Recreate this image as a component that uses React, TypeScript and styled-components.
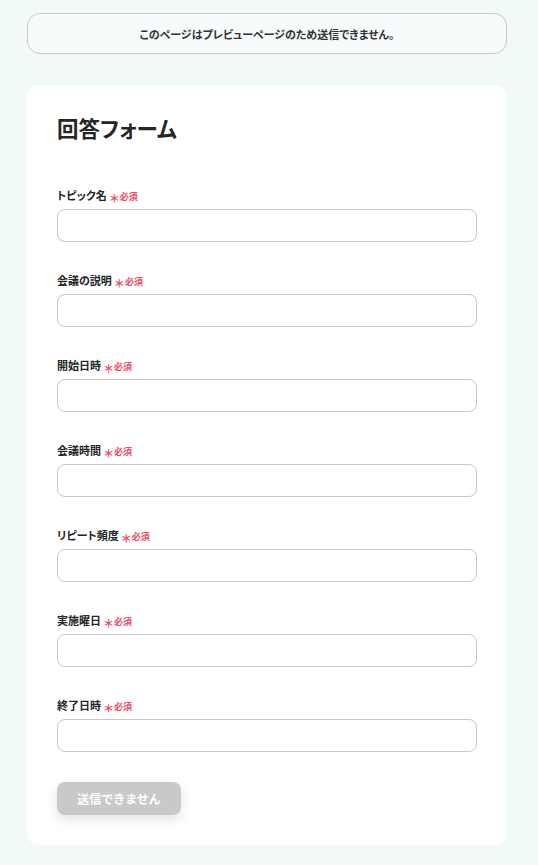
import React from "react";
import styled, { createGlobalStyle } from "styled-components";

const Global = createGlobalStyle`
  html, body { margin: 0; padding: 0; }
  body {
    background: #f2f9f9;
    font-family: "Noto Sans CJK JP", "Noto Sans", sans-serif;
    font-feature-settings: "palt";
    color: #262626;
  }
`;

const Page = styled.div`
  display: flex;
  flex-direction: column;
  align-items: center;
  padding: 13px 31px 20px 27px;
  gap: 31px;
`;

const Banner = styled.div`
  box-sizing: border-box;
  width: 480px;
  height: 41px;
  border: 1px solid #c8c8c8;
  border-radius: 13px;
  background: #f7fbfb;
  display: flex;
  align-items: center;
  justify-content: center;
  font-size: 11px;
  line-height: 16px;
  font-weight: 700;
  color: #333;
`;

const Card = styled.form`
  box-sizing: border-box;
  width: 480px;
  background: #fff;
  border-radius: 12px;
  padding: 28px 30px 30px;
  display: flex;
  flex-direction: column;
`;

const Title = styled.h1`
  margin: 0 0 44px;
  height: 30px;
  font-size: 21.5px;
  line-height: 30px;
  font-weight: 700;
  color: #262626;
`;

const Field = styled.div`
  display: flex;
  flex-direction: column;
  gap: 6px;
  margin-bottom: 30px;
`;

const Label = styled.label`
  display: flex;
  align-items: center;
  height: 16px;
  gap: 3px;
  font-size: 11px;
  line-height: 16px;
  font-weight: 700;
  color: #262626;
`;

const Required = styled.span`
  display: inline-flex;
  align-items: center;
  height: 16px;
  font-size: 9px;
  line-height: 16px;
  font-weight: 700;
  color: #ef4b63;
  padding-top: 3px;
`;

const Star = styled.span`
  font-size: 11px;
  line-height: 16px;
  padding-top: 2px;
  margin-right: 1px;
`;

const Input = styled.input`
  box-sizing: border-box;
  width: 420px;
  height: 33px;
  border: 1px solid #c8c8c8;
  border-radius: 8px;
  background: #fff;
  outline: none;
  font: inherit;
`;

const Submit = styled.button`
  align-self: flex-start;
  width: 124px;
  height: 33px;
  border: none;
  border-radius: 8px;
  background: #c9c9c9;
  color: #fff;
  font-family: inherit;
  font-feature-settings: normal;
  font-size: 12px;
  line-height: 16px;
  font-weight: 700;
  box-shadow: 0 4px 12px rgba(0, 0, 0, 0.12);
`;

const fields = [
  "トピック名",
  "会議の説明",
  "開始日時",
  "会議時間",
  "リピート頻度",
  "実施曜日",
  "終了日時",
];

export default function App() {
  return (
    <>
      <Global />
      <Page>
        <Banner>このページはプレビューページのため送信できません。</Banner>
        <Card onSubmit={(e) => e.preventDefault()}>
          <Title>回答フォーム</Title>
          {fields.map((f) => (
            <Field key={f}>
              <Label>
                {f}
                <Required>
                  <Star>＊</Star>必須
                </Required>
              </Label>
              <Input type="text" />
            </Field>
          ))}
          <Submit type="button" disabled>
            送信できません
          </Submit>
        </Card>
      </Page>
    </>
  );
}
